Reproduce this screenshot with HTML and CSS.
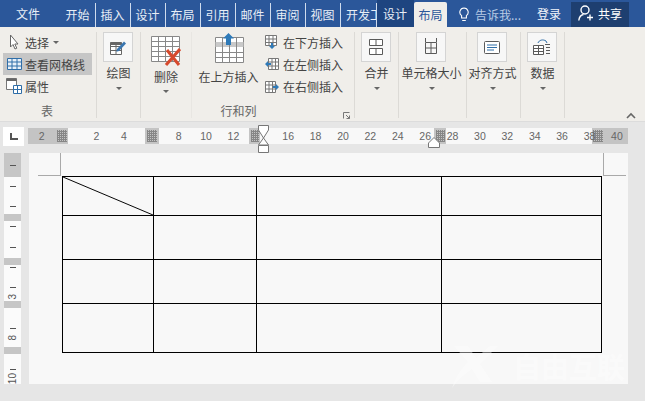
FILE: index.html
```html
<!DOCTYPE html>
<html lang="zh">
<head>
<meta charset="utf-8">
<title>布局</title>
<link rel="stylesheet" href="styles.css">
</head>
<body>
<div class="app">
  <header class="tabbar">
    <span class="tab file">文件</span>
    <span class="tab sep">开始</span>
    <span class="tab sep">插入</span>
    <span class="tab sep">设计</span>
    <span class="tab sep">布局</span>
    <span class="tab sep">引用</span>
    <span class="tab sep">邮件</span>
    <span class="tab sep">审阅</span>
    <span class="tab sep">视图</span>
    <span class="tab sep clip">开发工</span>
    <span class="tab ctx">设计</span>
    <span class="tab active">布局</span>
    <span class="tell">
      <svg width="10" height="15" viewBox="0 0 10 15"><path d="M5 1a4.200 4.200 0 0 0-2.400 7.600V11h4.800V8.600A4.200 4.200 0 0 0 5 1zM3.200 13.500h3.600" fill="none" stroke="#fff" stroke-width="1.100"/></svg>
      告诉我...
    </span>
    <span class="login">登录</span>
    <span class="share">
      <svg width="16" height="16" viewBox="0 0 16 16"><circle cx="7" cy="5" r="4" fill="none" stroke="#fff" stroke-width="1.400"/><path d="M.8 15.500c.4-3.500 2.200-5.500 4.700-6M12 9.500v6M9 12.500h6" fill="none" stroke="#fff" stroke-width="1.400"/></svg>
      共享
    </span>
  </header>

  <section class="ribbon">
    <div class="group g-table">
      <div class="rows">
        <div class="row">
          <svg width="14" height="16" viewBox="0 0 14 16"><path d="M4.500 1v12l2.500-2.500 2 4.500 1.800-.8-2-4.200h3.200z" fill="#fff" stroke="#666"/></svg>
          <span>选择</span><i class="caret small"></i>
        </div>
        <div class="row on">
          <svg width="15" height="12" viewBox="0 0 15 12"><path d="M.5.500h14v11H.5zM.5 4h14M.5 8h14M5 .5v11M10 .5v11" fill="#e8f0f8" stroke="#2f6ea8"/></svg>
          <span>查看网格线</span>
        </div>
        <div class="row">
          <svg width="16" height="16" viewBox="0 0 16 16"><path d="M.5.500h10v11H.5z" fill="#fff" stroke="#777"/><path d="M.5.500h10v2.500H.5z" fill="#666"/><path d="M7.500 7.500h8v8h-8zM7.500 11.500h8M11.500 7.500v8" fill="#fff" stroke="#2f6ea8"/></svg>
          <span>属性</span>
        </div>
      </div>
      <div class="glabel">表</div>
    </div>

    <div class="group g-draw">
      <div class="big">
        <div class="ibox">
          <svg width="18" height="18" viewBox="0 0 18 18"><path d="M1.500 4.500h11v12h-11zM1.500 8.500h11M1.500 12.500h11M7 4.500v12" fill="#fff" stroke="#666"/><path d="M1.500 4.500h11V7h-11z" fill="#666"/><path d="M8 11l7-7.500 2 2-7 7.500-2.600.7z" fill="#3a76b0"/></svg>
        </div>
        <span class="blabel">绘图</span>
        <i class="caret"></i>
      </div>
    </div>

    <div class="group g-del">
      <div class="big">
        <svg class="bare" width="32" height="30" viewBox="0 0 32 30"><path d="M2.500.5h28v25h-28zM2.500 5.500h28M2.500 10.500h28M2.500 15.500h28M2.500 20.500h28M9.500.5v25M16.500.5v25M23.500.5v25" fill="#fff" stroke="#888"/><path d="M17 29l14-16M18 14l12 15" stroke="#d6492c" stroke-width="3" fill="none"/></svg>
        <span class="blabel">删除</span>
        <i class="caret"></i>
      </div>
    </div>

    <div class="group g-rows">
      <div class="grow">
        <div class="big above">
          <svg class="bare" width="32" height="30" viewBox="0 0 32 30"><path d="M1.500 4.500h28v25h-28z" fill="#fff" stroke="#888"/><path d="M1.500 9h28v5h-28z" fill="#c9c9c9"/><path d="M1.500 19.500h28M1.500 24.500h28M8.500 4.500v25M15.500 4.500v25M22.500 4.500v25" stroke="#888" fill="none"/><path d="M14.500 0l5.500 5.500h-3V12h-5V5.500H9z" fill="#2f7ab8"/></svg>
          <span class="blabel">在上方插入</span>
        </div>
        <div class="rows ins">
          <div class="row">
            <svg width="14" height="14" viewBox="0 0 14 14"><path d="M.5.500h11v10H.5zM.5 4h11M.5 7.500h11M4 .5v10M8 .5v10" fill="#fff" stroke="#777"/><path d="M7 14l-3-3h2V8h2v3h2z" fill="#2f7ab8"/></svg>
            <span>在下方插入</span>
          </div>
          <div class="row">
            <svg width="14" height="14" viewBox="0 0 14 14"><path d="M3.500 1.500h10v11h-10zM3.500 5h10M3.500 9h10M7 1.500v11M10.500 1.500v11" fill="#fff" stroke="#777"/><path d="M0 7l3-3v2h3v2H3v2z" fill="#2f7ab8"/></svg>
            <span>在左侧插入</span>
          </div>
          <div class="row">
            <svg width="14" height="14" viewBox="0 0 14 14"><path d="M.5 1.500h10v11H.5zM.5 5h10M.5 9h10M4 1.500v11M7.500 1.500v11" fill="#fff" stroke="#777"/><path d="M14 7l-3-3v2H8v2h3v2z" fill="#2f7ab8"/></svg>
            <span>在右侧插入</span>
          </div>
        </div>
      </div>
      <div class="glabel">行和列</div>
      <svg class="launch" width="7" height="7" viewBox="0 0 7 7"><path d="M.5 6.500v-6h6M3 3l3.500 3.500M6.500 3.500v3h-3" fill="none" stroke="#777"/></svg>
    </div>

    <div class="group g-merge">
      <div class="big">
        <div class="ibox">
          <svg width="14" height="16" viewBox="0 0 14 16"><path d="M.5.500h13v6H.5zM.5 9.500h13v6H.5zM7 .5v6M7 9.500v6" fill="#fff" stroke="#5a5a5a"/></svg>
        </div>
        <span class="blabel">合并</span>
        <i class="caret"></i>
      </div>
    </div>

    <div class="group g-size">
      <div class="big">
        <div class="ibox">
          <svg width="16" height="18" viewBox="0 0 16 18"><path d="M2.500 4.500h11v11h-11zM2.500 10h11M8 4.500v11M2.500 0v4M13.500 0v4" fill="none" stroke="#5a5a5a"/></svg>
        </div>
        <span class="blabel">单元格大小</span>
        <i class="caret"></i>
      </div>
    </div>

    <div class="group g-align">
      <div class="big">
        <div class="ibox">
          <svg width="16" height="13" viewBox="0 0 16 13"><rect x=".5" y=".5" width="15" height="12" rx="1" fill="#fff" stroke="#5a5a5a"/><path d="M3 4h10M3 6.500h10M3 9h7" stroke="#2f6ea8" fill="none"/></svg>
        </div>
        <span class="blabel">对齐方式</span>
        <i class="caret"></i>
      </div>
    </div>

    <div class="group g-data">
      <div class="big">
        <div class="ibox">
          <svg width="18" height="16" viewBox="0 0 18 16"><path d="M.5 6.500h10v9H.5zM.5 9.500h10M.5 12.500h10M5.500 6.500v9" fill="#fff" stroke="#5a5a5a"/><path d="M5 4c1-3 5-4 8-2l1 2" fill="none" stroke="#2f6ea8"/><path d="M12 5.500h5M13 8.500h4M13 11.500h4M13 14.500h4" stroke="#5a5a5a" fill="none"/></svg>
        </div>
        <span class="blabel">数据</span>
        <i class="caret"></i>
      </div>
    </div>

    <svg class="collapse" width="10" height="7" viewBox="0 0 10 7"><path d="M1 6l4-4 4 4" fill="none" stroke="#666" stroke-width="1.600"/></svg>
  </section>

  <section class="workspace">
    <div class="corner"><i></i></div>
    <div class="hruler">
      <i class="hz hz1"></i><i class="hz hz2"></i><i class="hz hz3"></i><i class="hz hz4"></i><i class="hz hz5"></i>
      <span>2</span><span></span>
      <span>2</span><span>4</span><span></span>
      <span>8</span><span>10</span><span>12</span><span></span>
      <span>16</span><span>18</span><span>20</span><span>22</span><span>24</span><span>26</span>
      <span>28</span><span>30</span><span>32</span><span>34</span><span>36</span><span>38</span><span>40</span>
      <svg class="marker m-left" width="12" height="28" viewBox="0 0 12 28"><path d="M.5.500h10v4.500L5.500 13 .5 5z M5.500 13l5 7H.5z M.5 20.500h10v7H.5z" fill="#fff" stroke="#777"/></svg>
      <svg class="marker m-right" width="12" height="11" viewBox="0 0 12 11"><path d="M6 .5l5.500 5.500v4.500H.5V6z" fill="#fff" stroke="#777"/></svg>
    </div>

    <div class="vruler">
      <div class="vseg dark mid"><i></i></div>
      <div class="vseg w1"><i></i><i></i></div>
      <div class="vseg dark thin"></div>
      <div class="vseg w2"><i></i><i></i></div>
      <div class="vseg dark thin"></div>
      <div class="vseg w3"><i></i><i></i><b>3</b></div>
      <div class="vseg dark thin"></div>
      <div class="vseg w4"><i></i><b>8</b></div>
      <div class="vseg dark thin"></div>
      <div class="vseg w5"><i></i><b>10</b></div>
    </div>

    <div class="page">
      <div class="crop tl"></div>
      <div class="crop tr"></div>
      <div class="tablewrap">
        <table class="grid">
          <colgroup><col class="c1"><col class="c2"><col class="c3"><col class="c4"></colgroup>
          <tr class="r1"><td class="diag"><svg width="100%" height="100%" viewBox="0 0 91 39" preserveAspectRatio="none"><path d="M0 0L91 39" stroke="#000" stroke-width="1" fill="none"/></svg></td><td></td><td></td><td></td></tr>
          <tr class="r2"><td></td><td></td><td></td><td></td></tr>
          <tr class="r2"><td></td><td></td><td></td><td></td></tr>
          <tr class="r3"><td></td><td></td><td></td><td></td></tr>
        </table>
      </div>
      <div class="watermark">
        <svg width="50" height="44" viewBox="0 0 50 44"><path d="M4 2h14l8 12 14-12h8L30 20l12 18H30l-8-13C14 30 8 36 2 44 6 32 12 24 18 18z" fill="#fff"/></svg>
        <span>自由互联</span>
      </div>
    </div>
  </section>
</div>
</body>
</html>
```
FILE: styles.css
```css
* { box-sizing: border-box; }
html, body { margin: 0; padding: 0; }
body { font-family: "Noto Sans CJK SC", "Liberation Sans", sans-serif; font-size: 12px; color: #444; }
.app { width: 645px; height: 401px; display: flex; flex-direction: column; overflow: hidden; background: #e6e6e6; }

/* tab bar */
.tabbar { height: 27px; flex: none; display: flex; align-items: center; background: #2b579a; color: #e8eef6; }
.tab { width: 35px; height: 100%; display: flex; align-items: center; justify-content: center; white-space: nowrap; overflow: hidden; flex: none; }
.tab.file { width: 61px; padding-right: 5px; }
.tab.sep { border-right: 1px solid #cfdcee; height: 24px; margin-top: 2px; width: 35px; padding-right: 1px; }
.tab.clip { width: 36px; justify-content: flex-start; padding-left: 5px; padding-right: 0; }
.tab.ctx { width: 37px; background: #1e4580; height: 27px; padding-right: 1px; }
.tab.active { width: 33px; height: 25px; margin-top: 2px; background: #f0eeea; color: #2b579a; border-radius: 2px 2px 0 0; margin-right: 12px; }
.tell { display: flex; align-items: center; gap: 6px; width: 78px; flex: none; color: #b9cbe4; padding-top: 2px; white-space: nowrap; }
.login { width: 34px; flex: none; color: #f2f5fa; }
.share { width: 58px; height: 25px; flex: none; display: flex; align-items: center; justify-content: center; gap: 4px; background: #1e3f70; color: #fff; margin-top: 2px; padding-bottom: 3px; }

/* ribbon */
.ribbon { position: relative; height: 95px; flex: none; display: flex; background: #f0eeea; border-bottom: 1px solid #dcdcdc; padding-top: 5px; }
.group { position: relative; height: 86px; border-right: 1px solid #dcdad6; flex: none; display: flex; flex-direction: column; }
.g-table { width: 97px; }
.g-draw { width: 44px; }
.g-del { width: 51px; border-right-color: #e8e6e2; }
.g-rows { width: 163px; }
.g-merge { width: 44px; }
.g-size { width: 68px; }
.g-align { width: 54px; }
.g-data { width: 44px; }

.rows { display: flex; flex-direction: column; margin-top: -1px; }
.g-table .rows { padding-left: 3px; height: 66px; }
.row { display: flex; align-items: center; height: 23px; gap: 5px; white-space: nowrap; width: 89px; padding-left: 3px; }
.row svg { flex: none; }
.row.on { background: #c6c6c6; padding-left: 4px; gap: 3px; }
.row:last-child { gap: 3px; }
.g-table .row:first-child { gap: 5px; }
.glabel { position: absolute; left: 0; right: 2px; top: 70px; text-align: center; line-height: 18px; color: #666; }
.g-rows .glabel { left: -52px; right: 17px; }

.big { display: flex; flex-direction: column; align-items: center; width: 100%; white-space: nowrap; }
.ibox { width: 30px; height: 30px; margin-right: 2px; background: #f7f7f7; border: 1px solid #d4d4d4; display: flex; align-items: center; justify-content: center; flex: none; }
.bare { margin-top: 4px; height: 30px; flex: none; margin-right: 2px; }
.blabel { line-height: 18px; height: 18px; margin-top: 2px; }
.caret { display: block; margin-top: 5px; width: 0; height: 0; border: 3px solid transparent; border-top: 3.500px solid #666; border-bottom: 0; }
.caret.small { margin: 0 0 0 -1px; }
.g-del .caret { margin-top: 4px; }
.g-size .big, .g-align .big { padding-right: 2px; }

.grow { display: flex; height: 66px; }
.above { width: 73px; flex: none; }
.above .bare { margin: 1px 0 0 2px; }
.above .blabel { margin-top: 5px; }
.ins .row { padding-left: 0; gap: 4px; width: 80px; }
.launch { position: absolute; right: 4px; top: 80px; }
.collapse { position: absolute; left: 626px; top: 85px; }

/* workspace */
.workspace { position: relative; flex: 1; display: grid; grid-template-columns: 28px 600px; grid-template-rows: 31px 231px; padding-bottom: 17px; }
.corner { margin: 5px 0 0 3px; width: 21px; height: 19px; background: #fff; display: flex; align-items: center; justify-content: center; }
.corner i { display: block; width: 8px; height: 7px; border-left: 2px solid #555; border-bottom: 2px solid #555; }
.hruler { position: relative; margin-top: 6px; height: 16px; display: flex; background: #f8f8f8; color: #666; font-family: "Liberation Sans", sans-serif; font-size: 10.500px; }
.hruler span { position: relative; flex: none; width: 27.400px; text-align: center; line-height: 16px; }
.hz { position: absolute; top: 0; height: 16px; background-color: #c4c4c4; }
.hz::after { content: ""; position: absolute; top: 2px; bottom: 2px; background-image: repeating-linear-gradient(0deg, #868686 0 1px, transparent 1px 2px), repeating-linear-gradient(90deg, #868686 0 1px, transparent 1px 2px); }
.hz1 { left: 0; width: 40px; }
.hz1::after { left: 29px; right: 1px; }
.hz2 { left: 117px; width: 14px; }
.hz2::after { left: 2px; right: 2px; }
.hz3 { left: 221px; width: 11px; }
.hz3::after { left: 2px; right: 1px; }
.hz4 { left: 406px; width: 12px; }
.hz4::after { left: 2px; right: 1px; }
.hz5 { left: 564px; width: 36px; }
.hz5::after { left: 1px; width: 10px; }
.marker { position: absolute; }
.m-left { left: 230px; top: -3px; }
.m-right { left: 400px; top: 9px; }

.vruler { margin-left: 4px; width: 17px; height: 231px; overflow: hidden; display: flex; flex-direction: column; background: #fbfbfb; font-family: "Liberation Sans", sans-serif; font-size: 10px; color: #555; }
.vseg { display: flex; flex-direction: column; align-items: center; flex: none; }
.vseg i { display: block; width: 6px; height: 1px; background: #555; flex: none; }
.vseg b { font-weight: normal; writing-mode: vertical-rl; transform: rotate(180deg); line-height: 10px; flex: none; }
.dark { background: #c6c6c6; height: 24px; }
.dark.mid { justify-content: center; }
.dark.thin { height: 7px; }
.w1 { height: 37px; padding-top: 9px; gap: 19px; }
.w2 { height: 37px; padding-top: 5px; gap: 20px; }
.w3 { height: 36px; padding-top: 2px; gap: 19px; }
.w3 b { margin-top: -13px; }
.w4 { height: 39px; padding-top: 20px; gap: 6px; }
.w5 { height: 30px; padding-top: 15px; gap: 3px; }

.page { position: relative; width: 599px; height: 231px; background: #f8f8f8; padding: 23px 0 0 33px; margin-left: 1px; }
.crop { position: absolute; top: 0; height: 23px; width: 23px; border-bottom: 1px solid #a9a9a9; }
.crop.tl { left: 9px; border-right: 1px solid #a9a9a9; }
.crop.tr { left: 574px; border-left: 1px solid #a9a9a9; }
.grid { border-collapse: collapse; table-layout: fixed; width: 539px; }
.grid td { border: 1px solid #000; padding: 0; }
.c1 { width: 91px; }
.c2 { width: 103px; }
.c3 { width: 185px; }
.c4 { width: 160px; }
.r1 { height: 39px; }
.r2 { height: 44px; }
.r3 { height: 49px; }
.diag { line-height: 0; height: 39px; }
.diag svg { display: block; }

.watermark { position: absolute; left: 421px; top: 191px; width: 178px; height: 44px; display: flex; align-items: center; gap: 13px; opacity: .4; color: #fff; font-size: 28px; line-height: 32px; font-weight: 700; white-space: nowrap; }
.watermark svg { flex: none; }
```
